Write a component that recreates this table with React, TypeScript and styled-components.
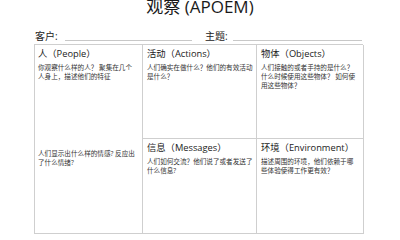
import React from "react";
import styled, { createGlobalStyle } from "styled-components";

const Global = createGlobalStyle`
  html, body { margin: 0; padding: 0; background: #ffffff; }
  body { font-family: "Open Sans", "Noto Sans CJK SC", sans-serif; color: #222; }
`;

const Page = styled.div`
  width: 400px;
  height: 240px;
  overflow: hidden;
  background: #fff;
`;

const Title = styled.h1`
  margin: -2px 0 0 0;
  font-size: 17px;
  line-height: 17px;
  font-weight: 400;
  text-align: center;
  color: #1a1a1a;
`;

const FieldRow = styled.div`
  display: flex;
  gap: 13px;
  width: 327px;
  height: 14px;
  margin: 13px 0 0 35px;
`;

const Field = styled.div`
  flex: 1;
  display: flex;
  align-items: flex-end;
`;

const Label = styled.span`
  font-size: 10px;
  line-height: 12px;
  color: #222;
`;

const Line = styled.span<{ $gap: number }>`
  flex: 1;
  margin-left: ${(p) => p.$gap}px;
  height: 6px;
  border-bottom: 1px solid #c8c8c8;
  margin-bottom: 1px;
`;

const Table = styled.div`
  display: grid;
  grid-template-columns: 108px 114px 107px;
  grid-template-rows: 94px 95px;
  width: 329px;
  margin: 2px 0 0 34px;
  border-top: 1px solid #cfcfcf;
  border-left: 1px solid #cfcfcf;
  box-sizing: border-box;
`;

const Cell = styled.div`
  border-right: 1px solid #cfcfcf;
  border-bottom: 1px solid #cfcfcf;
  padding: 3px 3px 0 4px;
  box-sizing: border-box;
  overflow: hidden;
`;

const TallCell = styled(Cell)`
  grid-row: span 2;
  display: grid;
  grid-template-rows: 93px 1fr;
  padding: 0;
`;

const Part = styled.div<{ $top: number }>`
  padding: ${(p) => p.$top}px 3px 0 3px;
`;

const Heading = styled.div`
  font-size: 9.3px;
  line-height: 12px;
  white-space: nowrap;
  color: #222;
`;

const Desc = styled.div<{ $mt?: number }>`
  margin-top: ${(p) => p.$mt ?? 3}px;
  font-size: 6.6px;
  line-height: 9px;
  color: #333;
  white-space: nowrap;
`;

export default function App() {
  return (
    <Page>
      <Global />
      <Title>观察 (APOEM)</Title>
      <FieldRow>
        <Field>
          <Label>客户:</Label>
          <Line $gap={7} />
        </Field>
        <Field>
          <Label>主题:</Label>
          <Line $gap={5} />
        </Field>
      </FieldRow>
      <Table>
        <TallCell>
          <Part $top={3}>
            <Heading>人（People）</Heading>
            <Desc>
              你观察什么样的人？ 聚集在几个
              <br />
              人身上，描述他们的特征
            </Desc>
          </Part>
          <Part $top={11}>
            <Desc $mt={0}>
              人们显示出什么样的情感? 反应出
              <br />
              了什么情绪?
            </Desc>
          </Part>
        </TallCell>
        <Cell>
          <Heading>活动（Actions）</Heading>
          <Desc>
            人们确实在做什么？他们的有效活动
            <br />
            是什么？
          </Desc>
        </Cell>
        <Cell>
          <Heading>物体（Objects）</Heading>
          <Desc>
            人们接触的或者手持的是什么？
            <br />
            什么时候使用这些物体？ 如何使
            <br />
            用这些物体？
          </Desc>
        </Cell>
        <Cell>
          <Heading>信息（Messages）</Heading>
          <Desc>
            人们如何交流？他们说了或者发送了
            <br />
            什么信息?
          </Desc>
        </Cell>
        <Cell>
          <Heading>环境（Environment）</Heading>
          <Desc>
            描述周围的环境，他们依赖于哪
            <br />
            些体验使得工作更有效？
          </Desc>
        </Cell>
      </Table>
    </Page>
  );
}
